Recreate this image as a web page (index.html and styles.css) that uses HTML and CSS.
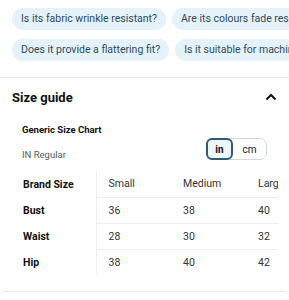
FILE: index.html
```html
<!DOCTYPE html>
<html lang="en">

<head>
    <meta charset="UTF-8" />
    <meta name="viewport" content="width=device-width, initial-scale=1" />
    <title>Size guide</title>
    <link rel="stylesheet" href="styles.css">
</head>

<body>
    <div class="questions">
        <div class="chip-row">
            <span class="chip">Is its fabric wrinkle resistant?</span>
            <span class="chip">Are its colours fade resistant?</span>
        </div>
        <div class="chip-row">
            <span class="chip">Does it provide a flattering fit?</span>
            <span class="chip">Is it suitable for machine wash?</span>
        </div>
    </div>

    <div class="divider"></div>

    <section class="size-guide">
        <div class="guide-head">
            <h2>Size guide</h2>
            <svg class="chevron" width="12" height="8" viewBox="0 0 12 8">
                <path d="M1.5 6.5 L6 2 L10.5 6.5" fill="none" stroke="#0f1111" stroke-width="2" />
            </svg>
        </div>

        <div class="chart-info">
            <div class="chart-text">
                <div class="chart-title">Generic Size Chart</div>
                <div class="chart-sub">IN Regular</div>
            </div>
            <div class="unit-toggle">
                <button class="active">in</button>
                <button>cm</button>
            </div>
        </div>

        <div class="table-wrap">
            <table class="size-table">
                <tr>
                    <th>Brand Size</th>
                    <td>Small</td>
                    <td>Medium</td>
                    <td>Large</td>
                </tr>
                <tr>
                    <th>Bust</th>
                    <td>36</td>
                    <td>38</td>
                    <td>40</td>
                </tr>
                <tr>
                    <th>Waist</th>
                    <td>28</td>
                    <td>30</td>
                    <td>32</td>
                </tr>
                <tr>
                    <th>Hip</th>
                    <td>38</td>
                    <td>40</td>
                    <td>42</td>
                </tr>
            </table>
        </div>
    </section>

    <div class="divider bottom"></div>
</body>

</html>
```

FILE: styles.css
```css
body {
    margin: 0;
    font-family: 'Roboto', sans-serif;
    background-color: #fff;
    color: #0f1111;
}

.questions {
    padding: 8px 12px 0 12px;
    width: 265px;
    overflow: hidden;
    display: flex;
    flex-direction: column;
    gap: 9px;
}

.chip-row {
    display: flex;
    gap: 6px;
    white-space: nowrap;
}

.chip {
    height: 22px;
    line-height: 22px;
    padding: 0 9px;
    border-radius: 11px;
    background-color: #e6f2fa;
    color: #2c4b5c;
    font-size: 10.5px;
    flex-shrink: 0;
}

.divider {
    height: 1px;
    background-color: #e7e7e7;
    margin-top: 16px;
}

.divider.bottom {
    margin: 16px 3px 0 4px;
}

.size-guide {
    padding: 0 12px;
}

.guide-head {
    display: flex;
    justify-content: space-between;
    align-items: center;
    height: 40px;
    margin-top: -1px;
}

.guide-head h2 {
    margin: 0;
    font-size: 13px;
    font-weight: 700;
}

.chart-info {
    display: flex;
    justify-content: space-between;
    align-items: flex-end;
    padding: 0 10px;
    margin-top: 6px;
}

.chart-title {
    font-size: 9.5px;
    font-weight: 700;
    line-height: 14px;
}

.chart-sub {
    font-size: 9.5px;
    color: #565959;
    line-height: 14px;
    margin-top: 11px;
}

.unit-toggle {
    display: flex;
    border: 1px solid #d5d9d9;
    border-radius: 7px;
    height: 20px;
    margin-bottom: 2px;
}

.unit-toggle button {
    font-family: inherit;
    font-size: 10px;
    border: none;
    background: none;
    padding: 0;
    width: 33px;
    color: #0f1111;
}

.unit-toggle button.active {
    width: 27px;
    margin: -1px 0 -1px -1px;
    border: 2px solid #2f5b77;
    border-radius: 6px;
    background-color: #edf6fb;
    font-weight: 700;
}

.table-wrap {
    width: 266px;
    overflow: hidden;
    margin-top: 9px;
}

.size-table {
    border-collapse: collapse;
    table-layout: fixed;
    width: 309px;
    font-size: 10.5px;
    white-space: nowrap;
}

.size-table th,
.size-table td {
    height: 26px;
    padding: 0 0 0 12px;
    text-align: left;
}

.size-table th {
    width: 84px;
    padding-left: 11px;
    font-weight: 700;
    border-right: 1px solid #eee;
    box-sizing: border-box;
}

.size-table td {
    width: 75px;
    color: #333;
    box-sizing: border-box;
}

.size-table tr:not(:last-child) td {
    border-bottom: 1px solid #eee;
}
```
